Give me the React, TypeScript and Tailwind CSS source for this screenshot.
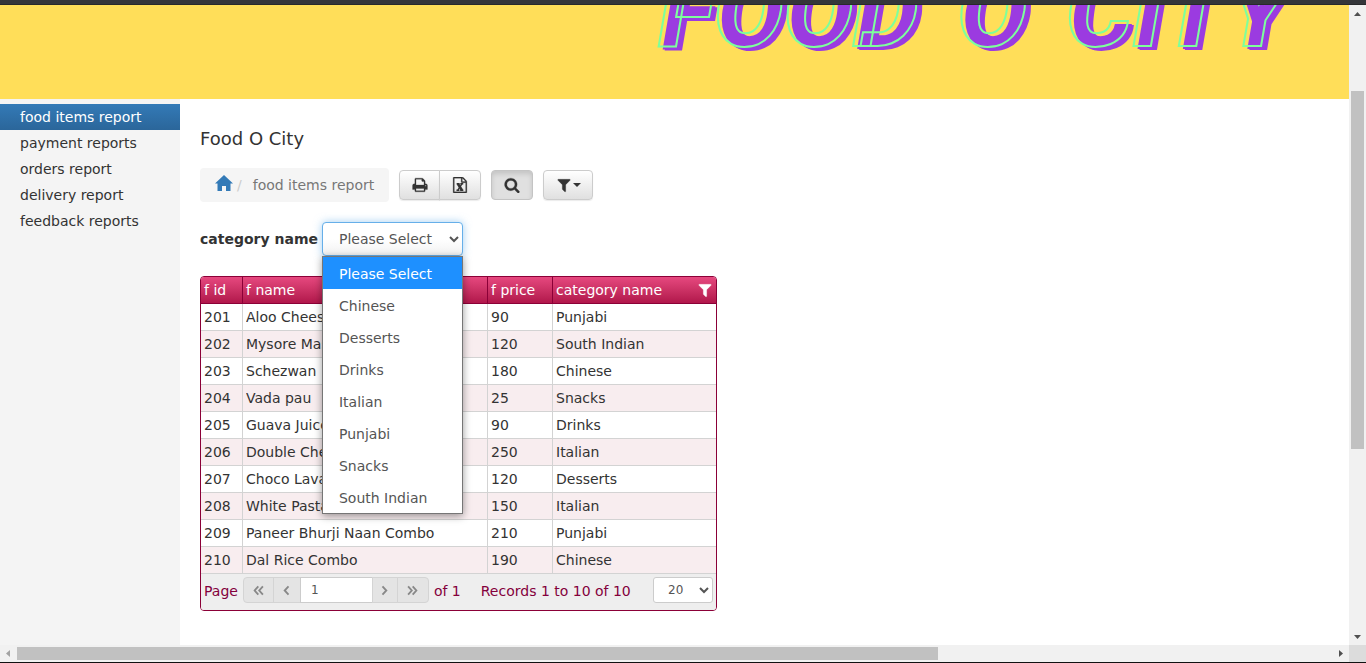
import React from "react";

const reports = ["food items report", "payment reports", "orders report", "delivery report", "feedback reports"];

const categories = ["Please Select", "Chinese", "Desserts", "Drinks", "Italian", "Punjabi", "Snacks", "South Indian"];

const items = [
  [201, "Aloo Cheese Paratha", 90, "Punjabi"],
  [202, "Mysore Masala Dosa", 120, "South Indian"],
  [203, "Schezwan  Noodles", 180, "Chinese"],
  [204, "Vada pau", 25, "Snacks"],
  [205, "Guava Juice", 90, "Drinks"],
  [206, "Double Cheese Pizza", 250, "Italian"],
  [207, "Choco Lava Cake", 120, "Desserts"],
  [208, "White Pasta", 150, "Italian"],
  [209, "Paneer Bhurji Naan Combo", 210, "Punjabi"],
  [210, "Dal Rice Combo", 190, "Chinese"],
];

const FILTER =
  "M1595 295q17 41-14 70l-493 493v742q0 42-39 59-13 5-25 5-27 0-45-19l-256-256q-19-19-19-45v-486l-493-493q-31-29-14-70 17-39 59-39h1280q42 0 59 39z";
const PRINT =
  "M448 1536h896v-256h-896v256zm0-640h896v-384h-160q-40 0-68-28t-28-68v-160h-640v640zm1152 64q0-26-19-45t-45-19-45 19-19 45 19 45 45 19 45-19 19-45zm128 0v416q0 13-9.5 22.5t-22.5 9.5h-224v160q0 40-28 68t-68 28h-960q-40 0-68-28t-28-68v-160h-224q-13 0-22.5-9.5t-9.5-22.5v-416q0-79 56.5-135.5t135.5-56.5h64v-544q0-40 28-68t68-28h672q40 0 88 20t76 48l152 152q28 28 48 76t20 88v256h64q79 0 135.5 56.5t56.5 135.5z";
const SEARCH =
  "M1216 832q0-185-131.5-316.5t-316.5-131.5-316.5 131.5-131.5 316.5 131.5 316.5 316.5 131.5 316.5-131.5 131.5-316.5zm512 832q0 52-38 90t-90 38q-54 0-90-38l-343-342q-179 124-399 124-143 0-273.5-55.5t-225-150-150-225-55.5-273.5 55.5-273.5 150-225 225-150 273.5-55.5 273.5 55.5 225 150 150 225 55.5 273.5q0 220-124 399l343 343q37 37 37 90z";
const SHEET =
  "M1596 380q28 28 48 76t20 88v1152q0 40-28 68t-68 28h-1344q-40 0-68-28t-28-68v-1600q0-40 28-68t68-28h896q40 0 88 20t76 48zm-444-244v376h376q-10-29-22-41l-313-313q-12-12-41-22zm384 1528v-1024h-416q-40 0-68-28t-28-68v-416h-768v1536h1280z";

function Glyph({ d, className = "size-4", children }: { d: string; className?: string; children?: React.ReactNode }) {
  return (
    <svg viewBox="0 0 1792 1792" className={className} fill="currentColor" aria-hidden="true">
      <path d={d} stroke="currentColor" strokeWidth="30" />
      {children}
    </svg>
  );
}

function Chevrons({ double, flip }: { double?: boolean; flip?: boolean }) {
  return (
    <svg viewBox="0 0 12 12" className="size-[11px]" fill="none" stroke="currentColor" strokeWidth="2" aria-hidden="true">
      <g transform={flip ? "rotate(180 6 6)" : undefined}>
        {double ? <path d="M5.8 1.5 1.8 6l4 4.5M10.8 1.5 6.800 6l4 4.5" /> : <path d="M8.200 1.500 4 6l4.200 4.500" />}
      </g>
    </svg>
  );
}

function Banner() {
  return (
    <header className="flex h-[94px] shrink-0 items-end justify-end gap-[39px] overflow-hidden bg-[#ffde59] pr-[60px] pb-[36px] [font-family:Roboto,sans-serif] text-[104px] leading-none font-black text-transparent italic [-webkit-text-stroke:2px_#7dff9c] [text-shadow:4px_3px_#9b3be0,6px_4px_#9b3be0]">
      <span>FOOD</span>
      <span>O</span>
      <span>CITY</span>
    </header>
  );
}

const arrow = "size-[17px] shrink-0";
const toolButton =
  "flex h-[30px] items-center justify-center border border-[#ccc] bg-linear-to-b from-white to-[#e0e0e0] text-[#333] shadow-[0_1px_1px_rgba(0,0,0,0.08)]";
const pageButton = "flex h-[26px] items-center justify-center border border-[#d4d4d4] bg-[#e4e4e4] text-[#888]";
const cell = "border-r border-b border-[#d3d3d3] px-[3px] last:border-r-0";
const headCell = "border-r border-b border-[#8b0037] px-[3px] text-left font-normal last:border-r-0";

function CategoryFilter() {
  return (
    <div className="mt-5 flex items-center gap-1">
      <label htmlFor="category" className="font-bold">category name</label>
      <div className="relative">
        <select
          id="category"
          className="block h-[34px] w-[141px] rounded border border-[#66afe9] bg-white bg-linear-to-b from-white from-50% to-[#f2f2f2] px-3 text-[#555] shadow-[0_0_8px_rgba(102,175,233,0.6)] outline-none"
        >
          {categories.map((c) => <option key={c}>{c}</option>)}
        </select>
        <ul className="absolute top-full left-0 z-10 w-full border border-[#767676] bg-white text-[#555] shadow-[0_2px_8px_rgba(0,0,0,0.4)]">
          {categories.map((c, i) => (
            <li key={c} className={i === 0 ? "h-8 bg-[#1e90ff] px-4 leading-[34px] text-white" : "h-8 px-4 leading-[34px]"}>{c}</li>
          ))}
        </ul>
      </div>
    </div>
  );
}

function Grid() {
  return (
    <section className="mt-5 w-[517px] overflow-hidden rounded border border-[#8b0037]">
      <table className="w-full table-fixed border-separate border-spacing-0">
        <colgroup>
          <col className="w-[42px]" />
          <col className="w-[245px]" />
          <col className="w-[65px]" />
          <col />
        </colgroup>
        <thead>
          <tr className="h-[27px] bg-linear-to-b from-[#e6487f] to-[#af1349] text-white">
            <th className={headCell}>f id</th>
            <th className={headCell}>f name</th>
            <th className={headCell}>f price</th>
            <th className={headCell}>
              <span className="flex items-center justify-between">
                category name
                <Glyph d={FILTER} />
              </span>
            </th>
          </tr>
        </thead>
        <tbody>
          {items.map((row) => (
            <tr key={row[0]} className="h-[27px] bg-white even:bg-[#f8edef]">
              {row.map((v, i) => (
                <td key={i} className={cell}><div className="truncate whitespace-pre">{v}</div></td>
              ))}
            </tr>
          ))}
        </tbody>
      </table>
      <div className="flex h-9 items-start justify-between bg-[#eee] px-[3px] pt-[3px] leading-7 text-[#84003c]">
        <div className="flex">
          <label htmlFor="page" className="mr-[5px]">Page</label>
          <button aria-label="First page" className={`${pageButton} w-[31px] rounded-l`}><Chevrons double /></button>
          <button aria-label="Previous page" className={`${pageButton} -ml-px w-7`}><Chevrons /></button>
          <input id="page" defaultValue="1" className="-ml-px h-[26px] w-[73px] border border-[#ccc] bg-white px-[10px] text-[12px] text-[#555]" />
          <button aria-label="Next page" className={`${pageButton} -ml-px w-[26px]`}><Chevrons flip /></button>
          <button aria-label="Last page" className={`${pageButton} -ml-px w-8 rounded-r`}><Chevrons double flip /></button>
          <span className="ml-[5px]">of 1</span>
          <span className="ml-5">Records 1 to 10 of 10</span>
        </div>
        <select aria-label="Records per page" defaultValue="20" className="h-[26px] w-[60px] rounded-[3px] border border-[#ccc] bg-white px-[10px] text-[12px] text-[#555]">
          <option>10</option>
          <option>20</option>
          <option>50</option>
        </select>
      </div>
    </section>
  );
}

export default function App() {
  return (
    <div className="flex h-screen flex-col overflow-hidden bg-white [font-family:Verdana,'DejaVu_Sans',sans-serif] text-[14px] leading-5 text-[#333]">
      <div className="h-[5px] shrink-0 border-b border-[#28292c] bg-[#35363a]" />
      <div className="flex min-h-0 flex-1">
        <div className="flex min-w-0 flex-1 flex-col">
          <Banner />
          <div className="flex min-h-0 flex-1">
            <nav className="w-[180px] shrink-0 bg-[#f4f4f4] pt-[5px]">
              {reports.map((r, i) => (
                <a
                  key={r}
                  href="#"
                  className={i === 0 ? "block bg-linear-to-b from-[#337ab7] to-[#2b669a] px-5 py-[3px] text-white" : "block px-5 py-[3px]"}
                >
                  {r}
                </a>
              ))}
            </nav>
            <main className="min-w-0 flex-1 px-5 pt-[30px]">
              <h1 className="text-[18px]">Food O City</h1>
              <div className="mt-[19px] flex items-center gap-[10px]">
                <div className="flex h-[34px] items-center rounded bg-[#f5f5f5] px-[15px] text-[#777]">
                  <a href="#" aria-label="Home" className="pb-1 text-[#337ab7]">
                    <svg viewBox="0 0 18 17" className="h-[17px] w-[18px]" fill="currentColor" aria-hidden="true">
                      <path d="M9 0 18 8.500h-2.500V16h-4.500V11H7v5H2.500V8.500H0z" />
                    </svg>
                  </a>
                  <span className="px-1 text-[#ccc]">/</span>
                  <span className="ml-[7px]">food items report</span>
                </div>
                <div className="flex">
                  <button aria-label="Print" className={`${toolButton} w-[41px] rounded-l`}><Glyph d={PRINT} /></button>
                  <button aria-label="Export to Excel" className={`${toolButton} -ml-px w-[42px] rounded-r`}>
                    <Glyph d={SHEET}>
                      <path d="M520 760h330M930 760h330M500 1480h330M920 1480h350" stroke="currentColor" strokeWidth="150" />
                      <path d="M650 760 1120 1480" stroke="currentColor" strokeWidth="280" />
                      <path d="M1110 760 660 1480" stroke="currentColor" strokeWidth="160" />
                    </Glyph>
                  </button>
                </div>
                <button aria-label="Search" className="flex h-[30px] w-[42px] items-center justify-center rounded border border-[#c4c4c4] bg-[#e0e0e0] shadow-[inset_0_3px_5px_rgba(0,0,0,0.125)]">
                  <Glyph d={SEARCH} />
                </button>
                <button aria-label="Filter" className={`${toolButton} w-[50px] gap-px rounded`}>
                  <Glyph d={FILTER} />
                  <svg viewBox="0 0 8 4" className="h-1 w-2" fill="currentColor" aria-hidden="true"><path d="M0 0h8L4 4z" /></svg>
                </button>
              </div>
              <CategoryFilter />
              <Grid />
            </main>
          </div>
        </div>
        <div className="flex w-[17px] shrink-0 flex-col items-center bg-[#f1f1f1]" aria-hidden="true">
          <svg viewBox="0 0 17 17" className={arrow} fill="#505050"><path d="M5 11h7L8.500 7z" /></svg>
          <div className="flex w-full flex-1 flex-col items-center pt-[69px]">
            <div className="h-2/3 w-[13px] bg-[#c1c1c1]" />
          </div>
          <svg viewBox="0 0 17 17" className={arrow} fill="#505050"><path d="M5 7h7l-3.500 4z" /></svg>
        </div>
      </div>
      <div className="flex h-[17px] shrink-0 items-center bg-[#f1f1f1]" aria-hidden="true">
        <svg viewBox="0 0 17 17" className={arrow} fill="#a3a3a3"><path d="M10 5v7L6 8.500z" /></svg>
        <div className="flex-1"><div className="h-[13px] w-[70%] bg-[#c1c1c1]" /></div>
        <svg viewBox="0 0 17 17" className={arrow} fill="#505050"><path d="M7 5v7l4-3.500z" /></svg>
        <div className="h-full w-[17px] bg-[#dcdcdc]" />
      </div>
      <div className="h-px shrink-0 bg-[#111]" />
    </div>
  );
}
